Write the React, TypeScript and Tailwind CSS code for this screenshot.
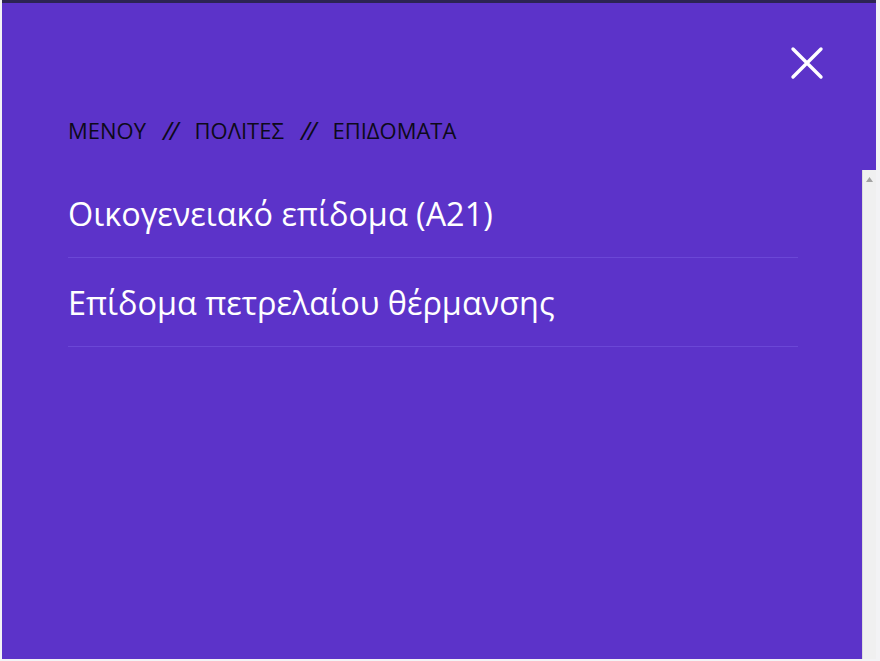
import React from 'react';

const crumbs = ['ΜΕΝΟΥ', 'ΠΟΛΙΤΕΣ', 'ΕΠΙΔΟΜΑΤΑ'];

const items = ['Οικογενειακό επίδομα (Α21)', 'Επίδομα πετρελαίου θέρμανσης'];

const CloseIcon = () => (
  <svg width="34" height="34" viewBox="0 0 34 34" fill="none">
    <path d="M3 3L31 31M31 3L3 31" stroke="white" strokeWidth="3.4" strokeLinecap="round" />
  </svg>
);

export default function App() {
  return (
    <div className="w-[880px] h-[661px] bg-[#f3f3f5] pl-[2px] pb-[2px] overflow-hidden">
      <div
        className="relative w-[874px] h-full bg-[#5c33c9] border-t-[3px] border-[#2c2453]"
        style={{ fontFamily: '"Open Sans", "Noto Sans", sans-serif' }}
      >
        {/* header */}
        <div className="flex justify-end pt-[43px] pr-[52px]">
          <button className="w-[34px] h-[34px] flex items-center justify-center">
            <CloseIcon />
          </button>
        </div>

        <div className="pl-[66px] pr-[78px]">
          <nav className="mt-[38px] flex items-center text-[22px] leading-[24px] text-[#0d0a1a]">
            {crumbs.map((c, i) => (
              <React.Fragment key={c}>
                {i > 0 && (
                  <span className="ml-[17px] mr-[18px] italic text-[25px] tracking-[-2px]">//</span>
                )}
                <span>{c}</span>
              </React.Fragment>
            ))}
          </nav>

          <ul className="mt-[27px]">
            {items.map((it) => (
              <li
                key={it}
                className="h-[89px] flex items-center border-b border-[#6b47d6] text-white text-[32.4px] leading-[40px]"
              >
                {it}
              </li>
            ))}
          </ul>
        </div>

        {/* scrollbar */}
        <div className="absolute right-0 top-[167px] bottom-0 w-[14px] bg-[#f0f0f0] border-l border-[#dcdcdc] flex justify-center pt-[7px]">
          <svg width="7" height="5" viewBox="0 0 7 5">
            <path d="M3.5 0L7 5H0Z" fill="#a3a3a3" />
          </svg>
        </div>
      </div>
    </div>
  );
}
